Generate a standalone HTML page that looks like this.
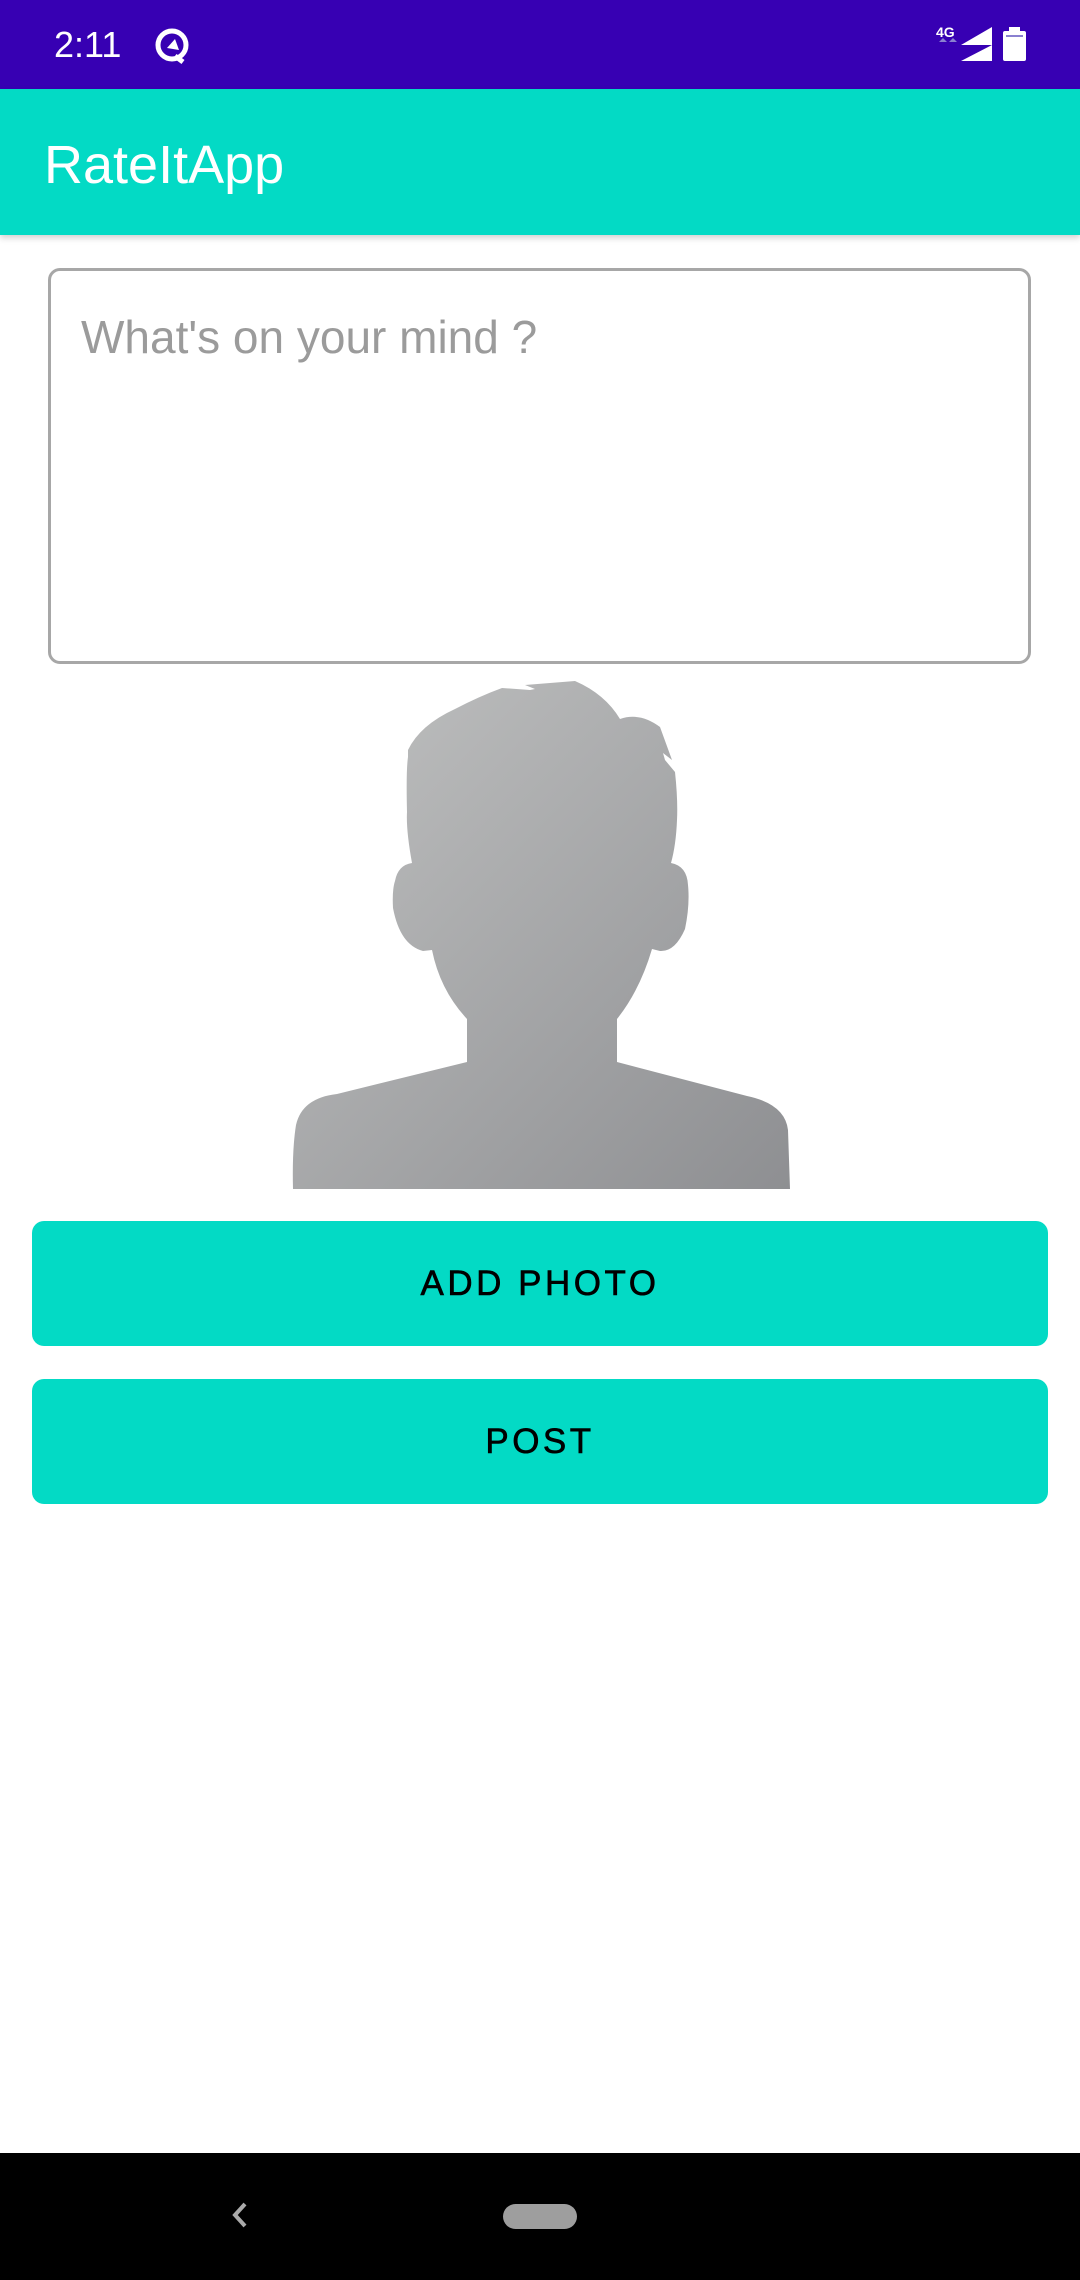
<!DOCTYPE html>
<html><head><meta charset="utf-8"><style>
html,body{margin:0;padding:0;}
body{width:1080px;height:2280px;position:relative;background:#fff;font-family:"Liberation Sans",sans-serif;overflow:hidden;}
.abs{position:absolute;}
#status{left:0;top:0;width:1080px;height:89px;background:#3700B3;}
#appbar{left:0;top:89px;width:1080px;height:146px;background:#03DAC5;box-shadow:0 3px 6px rgba(0,0,0,0.18);}
.btn{left:32px;width:1016px;height:125px;background:#03DAC5;border-radius:12px;color:#000;font-size:35px;font-weight:normal;letter-spacing:3.5px;text-align:center;line-height:125px;-webkit-text-stroke:0.6px #000;}
#nav{left:0;top:2153px;width:1080px;height:127px;background:#000;}
</style></head><body>
<div id="status" class="abs">
  <div class="abs" style="left:54px;top:23px;font-size:36px;color:#fff;line-height:44px;">2:11</div>
  <svg class="abs" style="left:153px;top:26px" width="40" height="40" viewBox="0 0 40 40">
    <circle cx="19" cy="19" r="14" fill="none" stroke="#fff" stroke-width="5"/>
    <path d="M14 22 L22 13 L26 24 Z" fill="#fff"/>
    <path d="M22 30 L30 36" stroke="#fff" stroke-width="5"/>
  </svg>
  <div class="abs" style="left:936px;top:24px;font-size:14px;color:#fff;font-weight:bold;">4G</div>
  <svg class="abs" style="left:937px;top:25px" width="95" height="40" viewBox="0 0 95 40">
    <path d="M2 17 L6 13 L10 17 Z M12 17 L16 13 L20 17 Z" fill="#8a80d0"/>
    <path d="M24 20 L55 2 L55 20 Z" fill="#fff"/>
    <path d="M24 36 L55 20 L55 36 Z" fill="#fff"/>
    <rect x="66" y="6" width="23" height="30" rx="2" fill="#fff"/>
    <rect x="72" y="2" width="11" height="5" fill="#fff"/>
    <rect x="69" y="10" width="17" height="2" fill="#8a80d0"/>
  </svg>
</div>
<div id="appbar" class="abs">
  <div class="abs" style="left:44px;top:46px;font-size:54px;color:#fff;line-height:60px;">RateItApp</div>
</div>
<div class="abs" style="left:48px;top:268px;width:977px;height:390px;border:3px solid #a7a7a7;border-radius:12px;"></div>
<div class="abs" style="left:81px;top:309px;font-size:46px;color:#9b9b9b;line-height:56px;">What's on your mind ?</div>
<svg class="abs" style="left:0;top:0" width="1080" height="1200" viewBox="0 0 1080 1200">
  <defs><linearGradient id="g" x1="0" y1="0" x2="1" y2="1">
    <stop offset="0" stop-color="#c0c1c1"/><stop offset="1" stop-color="#8e8f92"/></linearGradient></defs>
  <path fill="url(#g)" d="M437 712 L455 709 Q480 696 502 688 L530 690 L535 689 L525 685 L575 681 Q605 694 620 719 Q640 712 660 727 L672 760 L663 753 L665 760 L675 772 Q678 800 677 820 Q676 845 671 863 Q687 866 688 885 Q690 905 685 929 Q675 952 660 951 L652 949 Q640 990 617 1019 L617 1062 L747 1096 Q785 1104 788 1130 L790 1189 L293 1189 Q292 1150 296 1125 Q302 1098 337 1094 L467 1062 L467 1019 Q440 990 432 950 L423 951 Q400 945 393 908 Q392 890 395 881 Q398 865 412 863 Q406 830 407 812 Q406 770 408 757 L408 750 Q420 725 455 709 Z"/>
</svg>
<div class="abs btn" style="top:1221px;">ADD PHOTO</div>
<div class="abs btn" style="top:1379px;">POST</div>
<div id="nav" class="abs">
  <svg class="abs" style="left:228px;top:45px" width="24" height="34" viewBox="0 0 24 34">
    <path d="M17 6 L7 17 L17 28" fill="none" stroke="#aaa" stroke-width="4"/>
  </svg>
  <div class="abs" style="left:503px;top:51px;width:74px;height:25px;border-radius:13px;background:#9e9e9e;"></div>
</div>
</body></html>
